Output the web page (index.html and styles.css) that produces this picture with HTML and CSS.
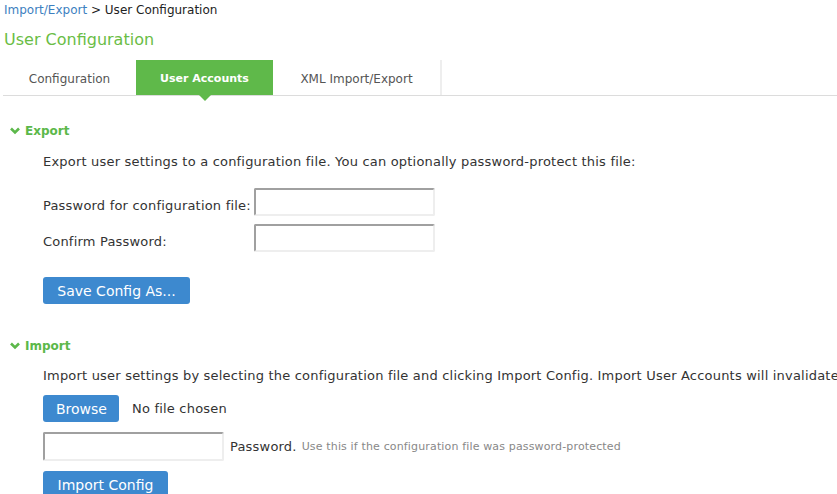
FILE: index.html
```html
<!DOCTYPE html>
<html>
<head>
<meta charset="utf-8">
<link rel="stylesheet" href="styles.css">
</head>
<body>
<div class="page">
  <div class="crumb"><a class="crumb-link">Import/Export</a> &gt; User Configuration</div>
  <h1 class="title">User Configuration</h1>
  <div class="tabs">
    <div class="tab">Configuration</div>
    <div class="tab active">User Accounts</div>
    <div class="tab last">XML Import/Export</div>
  </div>

  <div class="section">
    <div class="sec-head"><svg class="chev" viewBox="0 0 10 8" width="10" height="8"><path d="M1 1.5 L5 5.5 L9 1.5" fill="none" stroke="#5cb84a" stroke-width="2.6"/></svg>Export</div>
    <div class="sec-body">
      <p class="desc">Export user settings to a configuration file. You can optionally password-protect this file:</p>
      <div class="form-row first"><label class="lbl">Password for configuration file:</label><input class="inp" type="text"></div>
      <div class="form-row"><label class="lbl">Confirm Password:</label><input class="inp" type="text"></div>
      <button class="btn save">Save Config As...</button>
    </div>
  </div>

  <div class="section import">
    <div class="sec-head"><svg class="chev" viewBox="0 0 10 8" width="10" height="8"><path d="M1 1.5 L5 5.5 L9 1.5" fill="none" stroke="#5cb84a" stroke-width="2.6"/></svg>Import</div>
    <div class="sec-body">
      <p class="desc">Import user settings by selecting the configuration file and clicking Import Config. Import User Accounts will invalidate all existing sessions.</p>
      <div class="file-row"><button class="btn browse">Browse</button><span class="nofile">No file chosen</span></div>
      <div class="pw-row"><input class="inp inp2" type="text"><span class="pw-lbl">Password.</span><span class="hint">Use this if the configuration file was password-protected</span></div>
      <button class="btn importbtn">Import Config</button>
    </div>
  </div>
</div>
</body>
</html>
```
FILE: styles.css
```css
html, body { margin: 0; padding: 0; background: #fff; overflow: hidden; }
body { font-family: "DejaVu Sans", Verdana, sans-serif; color: #333; font-size: 12px; }
.page { padding: 0 0 0 4px; width: 833px; overflow: hidden; }
.crumb { height: 20px; line-height: 20px; font-size: 12px; color: #222; white-space: nowrap; }
.crumb-link { color: #3d7fbf; }
.title { margin: 0; font-weight: normal; font-size: 16px; color: #6abd45; height: 40px; line-height: 40px; }
.tabs { display: flex; height: 35px; border-bottom: 1px solid #dcdcdc; margin-left: -1px; }
.tab { width: 133px; display: flex; align-items: center; justify-content: center; font-size: 12px; color: #555; position: relative; padding-top: 2px; }
.tab.active { width: 137px; background: #5fb94a; color: #fff; font-weight: bold; font-size: 11px; letter-spacing: 0; }
.tab.active::after { content: ""; position: absolute; left: 50%; bottom: -6px; margin-left: -6px; border-left: 6px solid transparent; border-right: 6px solid transparent; border-top: 6px solid #5fb94a; }
.tab.last { width: 167px; border-right: 2px solid #eee; }
.section { padding-top: 27px; }
.sec-head { display: flex; align-items: center; font-weight: bold; color: #5cb84a; font-size: 12px; height: 16px; padding-left: 6px; }
.chev { margin-right: 5px; }
.sec-body { padding-left: 39px; font-size: 13px; letter-spacing: 0.2px; }
.desc { margin: 15px 0 0; line-height: 16px; white-space: nowrap; }
.form-row { display: flex; align-items: center; height: 28px; margin-top: 8px; }
.form-row.first { margin-top: 18px; }
.lbl { width: 211px; white-space: nowrap; padding-top: 6px; }
.inp { width: 181px; height: 28px; box-sizing: border-box; border: 2px solid #eee; border-top-color: #a0a0a0; border-left-color: #a0a0a0; border-radius: 2px; padding: 0 4px; font: inherit; background: #fff; }
.btn { display: block; border: 0; background: #3d89cf; color: #fff; font-family: "DejaVu Sans", Verdana, sans-serif; font-size: 14px; letter-spacing: 0; border-radius: 3px; padding: 0 13px; height: 27px; cursor: pointer; }
.save { margin-top: 25px; width: 147px; }
.section.import { padding-top: 34px; }
.import .desc { margin-top: 14px; }
.file-row { display: flex; align-items: center; margin-top: 11px; height: 27px; }
.browse { width: 76px; }
.nofile { margin-left: 13px; }
.pw-row { display: flex; align-items: center; margin-top: 10px; height: 29px; }
.inp2 { width: 181px; height: 29px; }
.pw-lbl { margin-left: 6px; }
.hint { margin-left: 5px; font-size: 11px; letter-spacing: 0.15px; color: #888; }
.importbtn { margin-top: 10px; width: 125px; }
```
